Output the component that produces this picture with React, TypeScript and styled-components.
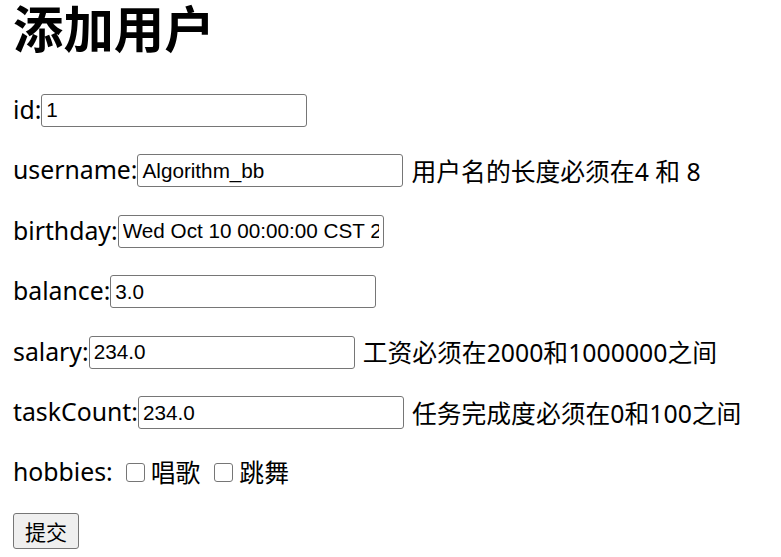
import React, { FC } from 'react';
import styled, { createGlobalStyle } from 'styled-components';

const GlobalStyle = createGlobalStyle`
  html, body {
    margin: 0;
    padding: 0;
    background: #ffffff;
  }
  body {
    color: #000000;
    font-family: "Noto Sans", "Noto Sans CJK SC", sans-serif;
  }
`;

const Page = styled.div`
  padding: 0 12px 0 13px;
`;

const Title = styled.h1`
  margin: 0 0 38px 0;
  font-size: 50.4px;
  line-height: 54px;
  font-weight: 700;
  font-family: "Noto Sans CJK SC", sans-serif;
`;

const Form = styled.form`
  display: flex;
  flex-direction: column;
  align-items: flex-start;
`;

const Row = styled.div<{ $height?: number }>`
  display: flex;
  align-items: center;
  height: ${(p) => p.$height ?? 36}px;
  margin-bottom: 24.6px;
  white-space: nowrap;
`;

const Label = styled.span`
  padding-bottom: 3px;
  font-size: 24.8px;
`;

const TextInput = styled.input`
  box-sizing: border-box;
  width: 266px;
  height: 33px;
  margin: 0;
  padding: 1.5px 4px;
  border: 1.5px solid #767676;
  border-radius: 3px;
  font-family: "Liberation Sans", Arial, sans-serif;
  font-size: 20.7px;
  color: #000000;
  background: #ffffff;
  outline: none;
`;

const Hint = styled.span`
  margin-left: 8px;
  padding-bottom: 2px;
  font-family: "Noto Sans", "Noto Sans CJK SC", sans-serif;
  font-size: 24.8px;
`;

const Check = styled.input<{ $gap: number }>`
  appearance: none;
  box-sizing: border-box;
  width: 19px;
  height: 19px;
  margin: 0 6px 0 ${(p) => p.$gap}px;
  border: 1.5px solid #767676;
  border-radius: 3px;
  background: #ffffff;
`;

const CheckText = styled.span`
  padding-bottom: 2px;
  font-family: "Noto Sans CJK SC", sans-serif;
  font-size: 24.8px;
`;

const SubmitButton = styled.button`
  box-sizing: border-box;
  height: 36px;
  margin-top: 0;
  padding: 0 11px;
  border: 1.5px solid #767676;
  border-radius: 3px;
  background: #efefef;
  color: #000000;
  font-family: "Noto Sans CJK SC", sans-serif;
  font-size: 21px;
  line-height: 1;
`;

type Field = { label: string; value: string; hint?: string };

const fields: Field[] = [
  { label: 'id:', value: '1' },
  { label: 'username:', value: 'Algorithm_bb', hint: '用户名的长度必须在4 和 8' },
  { label: 'birthday:', value: 'Wed Oct 10 00:00:00 CST 2018' },
  { label: 'balance:', value: '3.0' },
  { label: 'salary:', value: '234.0', hint: '工资必须在2000和1000000之间' },
  { label: 'taskCount:', value: '234.0', hint: '任务完成度必须在0和100之间' },
];

const App: FC = () => {
  return (
    <Page>
      <GlobalStyle />
      <Title>添加用户</Title>
      <Form onSubmit={(e) => e.preventDefault()}>
        {fields.map((f) => (
          <Row key={f.label}>
            <Label>{f.label}</Label>
            <TextInput type="text" defaultValue={f.value} />
            {f.hint && <Hint>{f.hint}</Hint>}
          </Row>
        ))}
        <Row $height={33}>
          <Label>hobbies:</Label>
          <Check type="checkbox" $gap={13} />
          <CheckText>唱歌</CheckText>
          <Check type="checkbox" $gap={14} />
          <CheckText>跳舞</CheckText>
        </Row>
        <SubmitButton type="submit">提交</SubmitButton>
      </Form>
    </Page>
  );
};

export default App;
